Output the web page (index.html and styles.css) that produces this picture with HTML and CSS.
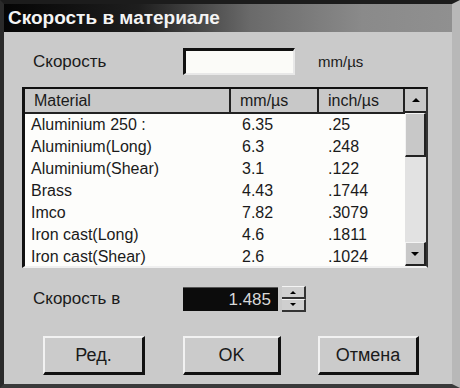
FILE: index.html
```html
<!DOCTYPE html>
<html>
<head>
<meta charset="utf-8">
<link rel="stylesheet" href="styles.css">
</head>
<body>
<div class="window">
  <div class="titlebar">Скорость в материале</div>
  <div class="content">
    <div class="row-speed">
      <span class="label">Скорость</span>
      <div class="input"></div>
      <span class="unit">mm/µs</span>
    </div>
    <div class="listbox">
      <div class="list-main">
        <div class="header">
          <div class="hcell c1">Material</div>
          <div class="hcell c2">mm/µs</div>
          <div class="hcell c3">inch/µs</div>
        </div>
        <div class="rows">
          <div class="row"><span class="c1">Aluminium 250 :</span><span class="c2">6.35</span><span class="c3">.25</span></div>
          <div class="row"><span class="c1">Aluminium(Long)</span><span class="c2">6.3</span><span class="c3">.248</span></div>
          <div class="row"><span class="c1">Aluminium(Shear)</span><span class="c2">3.1</span><span class="c3">.122</span></div>
          <div class="row"><span class="c1">Brass</span><span class="c2">4.43</span><span class="c3">.1744</span></div>
          <div class="row"><span class="c1">Imco</span><span class="c2">7.82</span><span class="c3">.3079</span></div>
          <div class="row"><span class="c1">Iron cast(Long)</span><span class="c2">4.6</span><span class="c3">.1811</span></div>
          <div class="row"><span class="c1">Iron cast(Shear)</span><span class="c2">2.6</span><span class="c3">.1024</span></div>
        </div>
      </div>
      <div class="scrollbar">
        <div class="sbtn up"><svg width="10" height="6" viewBox="0 0 10 6"><polygon points="1,5 5,1 9,5" fill="#000"/></svg></div>
        <div class="thumb"></div>
        <div class="track"></div>
        <div class="sbtn down"><svg width="10" height="6" viewBox="0 0 10 6"><polygon points="1,1 5,5 9,1" fill="#000"/></svg></div>
      </div>
    </div>
    <div class="row-spin">
      <span class="label">Скорость в</span>
      <div class="spinval">1.485</div>
      <div class="spinbtns">
        <div class="spb"><svg width="6" height="4" viewBox="0 0 6 4"><polygon points="0,4 3,1 6,4" fill="#000"/></svg></div>
        <div class="spb"><svg width="6" height="4" viewBox="0 0 6 4"><polygon points="0,0 3,3 6,0" fill="#000"/></svg></div>
      </div>
    </div>
    <div class="buttons">
      <div class="btn b1">Ред.</div>
      <div class="btn b2">OK</div>
      <div class="btn b3">Отмена</div>
    </div>
  </div>
</div>
</body>
</html>
```
FILE: styles.css
```css
html, body {
  margin: 0;
  padding: 0;
  background: #c9c9c9;
}
body {
  font-family: "Liberation Sans", Arial, sans-serif;
  color: #1a1a1a;
}
.window {
  width: 460px;
  height: 388px;
  box-sizing: border-box;
  border-top: 4px solid #1c1c1c;
  border-left: 4px solid #2a2a2a;
  border-bottom: 4px solid #3a3a3a;
  border-right: 8px solid #b8b8b8;
  background: #cacaca;
  overflow: hidden;
}
.titlebar {
  height: 28px;
  box-sizing: border-box;
  padding-left: 4px;
  line-height: 28px;
  font-size: 19px;
  font-weight: bold;
  color: #f4f4f4;
  background: linear-gradient(to right, #050505 0%, #1e1e1e 30%, #6a6a6a 55%, #8a8a8a 80%, #909090 100%);
  white-space: nowrap;
}
.content {
  display: flex;
  flex-direction: column;
}
.row-speed {
  display: flex;
  align-items: center;
  margin-top: 16px;
  height: 27px;
  padding-left: 29px;
}
.label {
  width: 150px;
  font-size: 17px;
}
.input {
  width: 112px;
  height: 27px;
  box-sizing: border-box;
  background: #fbfbf8;
  border-top: 3px solid #111;
  border-left: 3px solid #111;
  border-right: 2px solid #e8e8e8;
  border-bottom: 2px solid #e8e8e8;
}
.unit {
  margin-left: 23px;
  font-size: 15px;
}
.listbox {
  margin-top: 12px;
  margin-left: 18px;
  width: 406px;
  height: 181px;
  box-sizing: border-box;
  display: flex;
  border-top: 2px solid #111;
  border-left: 3px solid #111;
  border-right: 2px solid #333;
  border-bottom: 2px solid #f0f0f0;
}
.list-main {
  flex: 1;
  background: #fdfdfb;
  display: flex;
  flex-direction: column;
}
.header {
  display: flex;
  height: 25px;
  background: #c8c8c8;
  border-bottom: 2px solid #222;
  box-sizing: border-box;
}
.hcell {
  font-size: 16px;
  line-height: 23px;
  box-sizing: border-box;
  border-right: 2px solid #222;
  padding-left: 9px;
}
.c1 { width: 206px; }
.c2 { width: 88px; }
.c3 { width: 86px; }
.rows {
  padding-top: 0px;
}
.row {
  display: flex;
  height: 22px;
  line-height: 22px;
  font-size: 16px;
}
.row span { padding-left: 6px; box-sizing: border-box; }
.row .c2 { padding-left: 11px; }
.row .c3 { padding-left: 9px; }
.scrollbar {
  width: 22px;
  display: flex;
  flex-direction: column;
  background: #dedede;
}
.sbtn {
  height: 24px;
  box-sizing: border-box;
  background: #c8c8c8;
  display: flex;
  align-items: center;
  justify-content: center;
}
.sbtn.up {
  border-bottom: 2px solid #222;
}
.sbtn.down {
  height: 24px;
  border-top: 1px solid #f4f4f4;
  border-left: 1px solid #f4f4f4;
  border-right: 2px solid #222;
  border-bottom: 2px solid #222;
}
.thumb {
  height: 44px;
  box-sizing: border-box;
  background: #c8c8c8;
  border-top: 1px solid #f2f2f2;
  border-left: 1px solid #f2f2f2;
  border-right: 2px solid #222;
  border-bottom: 2px solid #222;
}
.track {
  flex: 1;
  background: #e2e2e2;
}
.row-spin {
  display: flex;
  align-items: center;
  margin-top: 18px;
  height: 26px;
  padding-left: 29px;
}
.spinval {
  width: 95px;
  height: 24px;
  box-sizing: border-box;
  background: #0c0c0c;
  color: #d8d8d8;
  font-size: 17px;
  line-height: 24px;
  text-align: right;
  padding-right: 7px;
  border-top: 1px solid #555;
}
.spinbtns {
  margin-left: 4px;
  width: 24px;
  height: 26px;
  display: flex;
  flex-direction: column;
}
.spb {
  flex: 1;
  box-sizing: border-box;
  background: #cfcfcf;
  border-top: 1px solid #f4f4f4;
  border-bottom: 2px solid #333;
  border-right: 2px solid #333;
  display: flex;
  align-items: center;
  justify-content: center;
}
.buttons {
  display: flex;
  margin-top: 24px;
  padding-left: 39px;
}
.btn {
  height: 39px;
  box-sizing: border-box;
  background: #cbcbcb;
  border-top: 2px solid #f2f2f2;
  border-left: 2px solid #f2f2f2;
  border-right: 3px solid #111;
  border-bottom: 3px solid #111;
  display: flex;
  align-items: center;
  justify-content: center;
  font-size: 18px;
}
.b1 { width: 102px; }
.b2 { width: 98px; margin-left: 38px; }
.b3 { width: 101px; margin-left: 37px; }
```
